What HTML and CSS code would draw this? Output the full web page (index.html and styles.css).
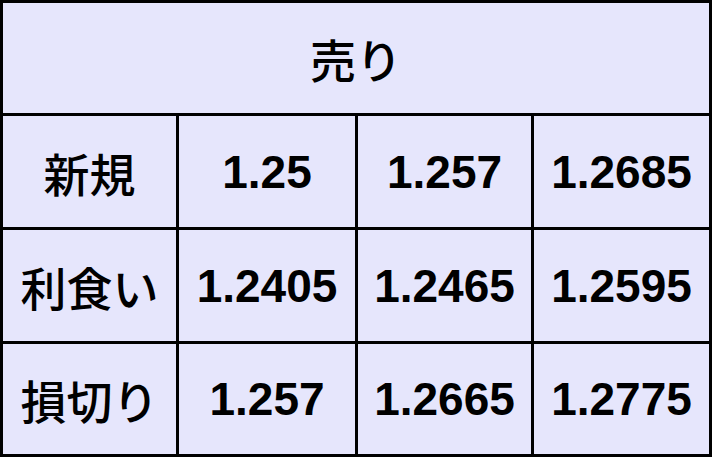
FILE: index.html
```html
<!DOCTYPE html>
<html lang="ja">
<head>
<meta charset="utf-8">
<title>売り</title>
<link rel="stylesheet" href="styles.css">
</head>
<body>
<div class="sheet">
  <div class="cell head">売り</div>
  <div class="cell label">新規</div>
  <div class="cell num">1.25</div>
  <div class="cell num">1.257</div>
  <div class="cell num">1.2685</div>
  <div class="cell label">利食い</div>
  <div class="cell num">1.2405</div>
  <div class="cell num">1.2465</div>
  <div class="cell num">1.2595</div>
  <div class="cell label">損切り</div>
  <div class="cell num">1.257</div>
  <div class="cell num">1.2665</div>
  <div class="cell num">1.2775</div>
</div>
</body>
</html>
```
FILE: styles.css
```css
html, body {
  margin: 0;
  padding: 0;
  background: #ffffff;
}
.sheet {
  width: 712px;
  height: 457px;
  box-sizing: border-box;
  padding: 3px;
  background: #000000;
  display: grid;
  grid-template-columns: 173px 176px 173px 175px;
  grid-template-rows: 110px 111px 111px 110px;
  gap: 3px;
}
.cell {
  background: #e6e6fc;
  color: #000000;
  display: flex;
  align-items: center;
  justify-content: center;
  font-size: 46px;
  font-weight: 700;
  line-height: 1;
}
.head {
  grid-column: 1 / 5;
}
.head, .label {
  font-family: "Noto Sans CJK JP", sans-serif;
  font-weight: 500;
}
.num {
  font-family: "Liberation Sans", Arial, sans-serif;
}
```
